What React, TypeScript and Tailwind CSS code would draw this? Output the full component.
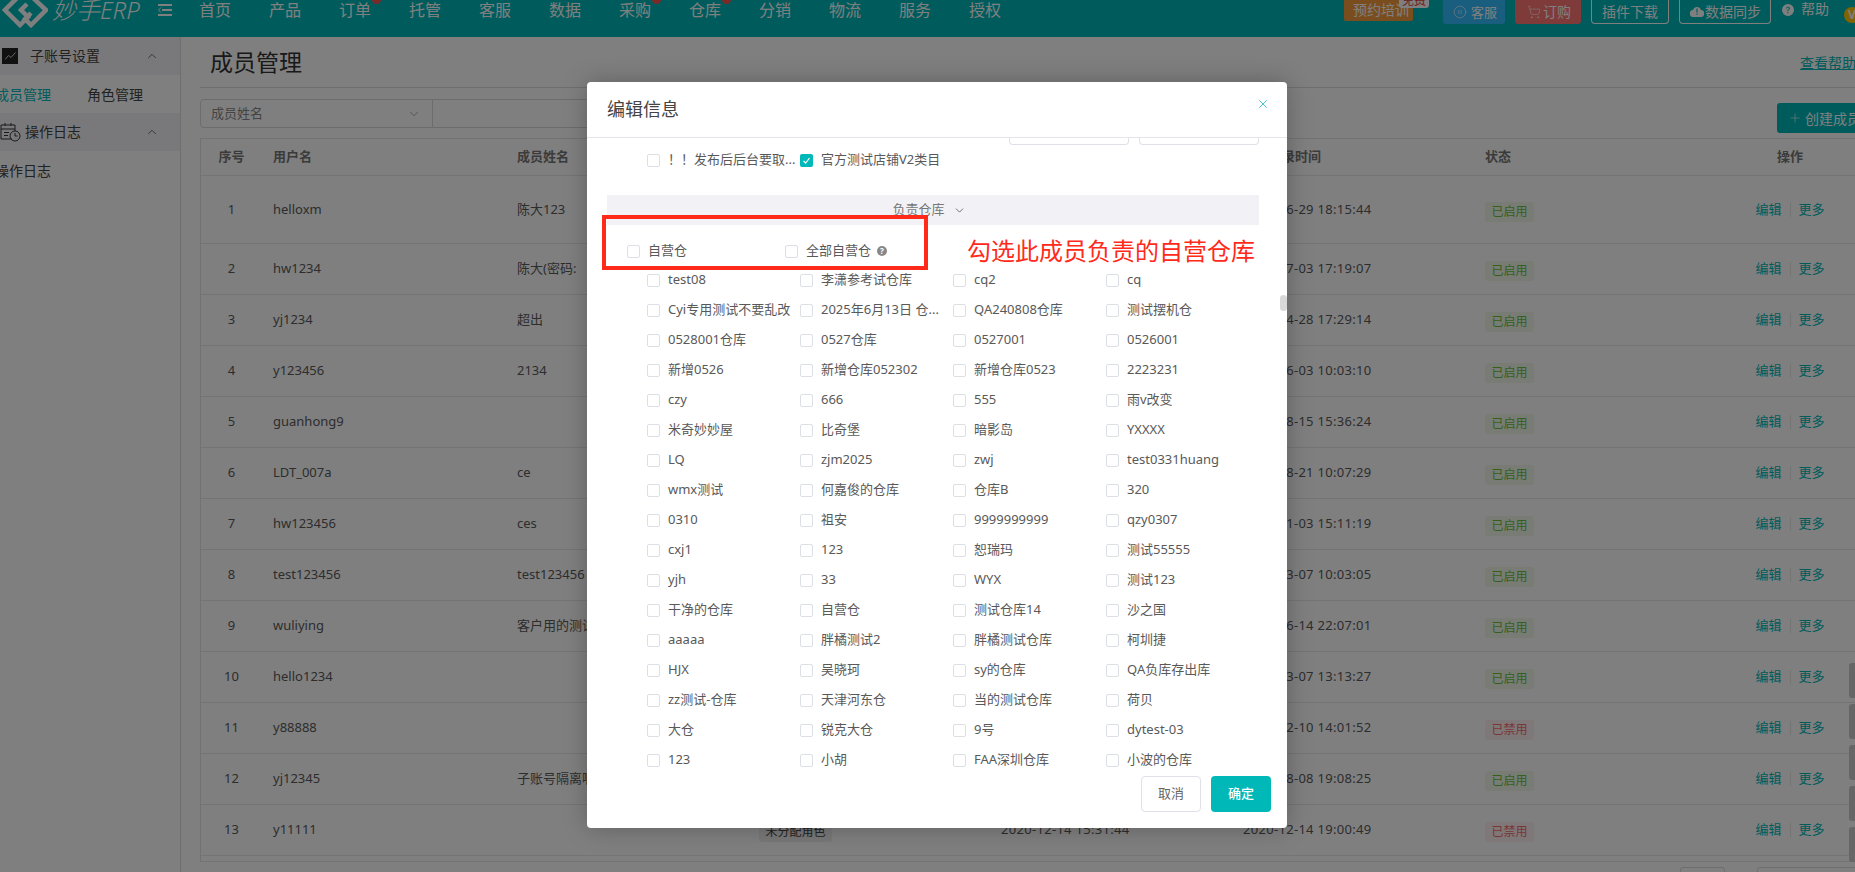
import { BsQuestionCircleFill } from "react-icons/bs";
import { ChevronDown, ChevronUp, CirclePause, Plus, ShoppingCart, X } from "lucide-react";

const navItems = [
  { label: "首页" },
  { label: "产品" },
  { label: "订单", dot: true },
  { label: "托管" },
  { label: "客服" },
  { label: "数据" },
  { label: "采购", dot: true },
  { label: "仓库", dot: true },
  { label: "分销" },
  { label: "物流" },
  { label: "服务" },
  { label: "授权" },
];

const members = [
  { user: "helloxm", name: "陈大123", created: "2021-03-11 10:22:15", login: "2025-06-29 18:15:44", on: true },
  { user: "hw1234", name: "陈大(密码:", created: "2021-04-02 11:30:08", login: "2025-07-03 17:19:07", on: true },
  { user: "yj1234", name: "超出", created: "2021-05-19 09:12:33", login: "2025-04-28 17:29:14", on: true },
  { user: "y123456", name: "2134", created: "2021-06-21 14:41:50", login: "2025-06-03 10:03:10", on: true },
  { user: "guanhong9", name: "", created: "2021-08-15 15:36:24", login: "2024-08-15 15:36:24", on: true },
  { user: "LDT_007a", name: "ce", created: "2021-10-08 16:05:12", login: "2024-08-21 10:07:29", on: true },
  { user: "hw123456", name: "ces", created: "2021-11-30 13:48:02", login: "2025-01-03 15:11:19", on: true },
  { user: "test123456", name: "test123456", created: "2022-01-14 10:20:41", login: "2025-03-07 10:03:05", on: true },
  { user: "wuliying", name: "客户用的测试", created: "2022-02-09 17:55:36", login: "2024-06-14 22:07:01", on: true },
  { user: "hello1234", name: "", created: "2022-03-01 09:09:09", login: "2025-03-07 13:13:27", on: true },
  { user: "y88888", name: "", created: "2020-12-10 14:01:52", login: "2020-12-10 14:01:52", on: false },
  { user: "yj12345", name: "子账号隔离啊", created: "2022-07-18 11:27:40", login: "2024-08-08 19:08:25", on: true },
  { user: "y11111", name: "", created: "2020-12-14 15:31:44", login: "2020-12-14 19:00:49", on: false },
];

const warehouses = [
  ["test08", "李潇参考试仓库", "cq2", "cq"],
  ["Cyi专用测试不要乱改", "2025年6月13日 仓...", "QA240808仓库", "测试摆机仓"],
  ["0528001仓库", "0527仓库", "0527001", "0526001"],
  ["新增0526", "新增仓库052302", "新增仓库0523", "2223231"],
  ["czy", "666", "555", "雨v改变"],
  ["米奇妙妙屋", "比奇堡", "暗影岛", "YXXXX"],
  ["LQ", "zjm2025", "zwj", "test0331huang"],
  ["wmx测试", "何嘉俊的仓库", "仓库B", "320"],
  ["0310", "祖安", "9999999999", "qzy0307"],
  ["cxj1", "123", "恕瑞玛", "测试55555"],
  ["yjh", "33", "WYX", "测试123"],
  ["干净的仓库", "自营仓", "测试仓库14", "沙之国"],
  ["aaaaa", "胖橘测试2", "胖橘测试仓库", "柯圳捷"],
  ["HJX", "吴晓珂", "sy的仓库", "QA负库存出库"],
  ["zz测试-仓库", "天津河东仓", "当的测试仓库", "荷贝"],
  ["大仓", "锐克大仓", "9号", "dytest-03"],
  ["123", "小胡", "FAA深圳仓库", "小波的仓库"],
];

const Check = ({ label, checked }: { label: string; checked?: boolean }) => (
  <div className="flex items-center gap-[8px] text-[13px] text-[#595959] whitespace-nowrap">
    {checked ? (
      <span className="w-[13px] h-[13px] rounded-[2px] bg-[#00b8b8] flex items-center justify-center">
        <svg width="9" height="9" viewBox="0 0 9 9" fill="none">
          <path d="M1.5 4.8 L3.6 7 L7.5 2" stroke="#fff" strokeWidth="1.2" />
        </svg>
      </span>
    ) : (
      <span className="w-[13px] h-[13px] rounded-[2px] border border-[#dcdfe6] bg-white" />
    )}
    <span>{label}</span>
  </div>
);

const Header = () => (
  <header className="h-[37px] bg-[#00b8b8] flex items-start text-white overflow-hidden">
    <svg className="ml-[2px] shrink-0" width="46" height="28" viewBox="0 0 46 28" fill="none" stroke="#fff" strokeWidth="4.5">
      <path d="M17 -4 L3 10 L18 25 L26 17 L19 10 L25 4" />
      <path d="M29 -4 L44 10 L29 25 L23 19 L29 13" />
    </svg>
    <span className="ml-[4px] w-[106px] text-[24px] leading-[20px] italic font-light whitespace-nowrap">妙手ERP</span>
    <svg className="mt-[4px] shrink-0" width="14" height="12" viewBox="0 0 14 12" fill="none" stroke="#fff" strokeWidth="2">
      <path d="M0 1 H14 M4 6 H14 M0 11 H14" />
      <path d="M3 3.5 L0.5 6 L3 8.5" strokeWidth="1" />
    </svg>
    <nav className="ml-[27px] flex gap-[38px]">
      {navItems.map(item => (
        <div key={item.label} className="relative w-[32px] text-[16px] leading-[20px] whitespace-nowrap">
          {item.label}
          {item.dot && <span className="absolute left-[33px] top-[-5px] w-[9px] h-[9px] rounded-full bg-[#ff5050]" />}
        </div>
      ))}
    </nav>
    <div className="ml-auto flex items-start text-[14px] leading-[20px] whitespace-nowrap">
      <div className="relative w-[69px] h-[21px] pl-[9px] bg-[#f59a3c] rounded-b-[2px]">
        预约培训
        <span className="absolute left-[55px] top-[-6px] w-[30px] h-[14px] rounded-[3px] bg-white text-[#e04040] text-[12px] leading-[14px] text-center">免费</span>
      </div>
      <div className="ml-[30px] w-[62px] h-[24px] pl-[10px] bg-[#34bcff] rounded-b-[3px] flex items-center gap-[4px] text-[13px]">
        <CirclePause size={14} strokeWidth={1} />
        客服
      </div>
      <div className="ml-[10px] w-[66px] h-[24px] pl-[12px] bg-[#ff7474] rounded-b-[3px] flex items-center gap-[2px]">
        <ShoppingCart size={14} strokeWidth={1} />
        订购
      </div>
      <div className="ml-[10px] w-[78px] h-[24px] border border-t-0 border-white rounded-b-[4px] flex items-center justify-center">插件下载</div>
      <div className="ml-[10px] w-[92px] h-[24px] border border-t-0 border-white rounded-b-[4px] flex items-center pl-[10px] gap-[1px]">
        <svg width="14" height="11" viewBox="0 0 14 11" fill="#fff">
          <path d="M3.5 11 A3.5 3.5 0 0 1 3 4 A4.2 4.2 0 0 1 11 4 A3.5 3.5 0 0 1 10.5 11 Z" />
          <path d="M6.4 2.5 H7.6 V6.5 H6.4 Z M6.4 7.5 H7.6 V8.8 H6.4 Z" fill="#00b8b8" />
        </svg>
        数据同步
      </div>
      <BsQuestionCircleFill className="ml-[11px] mt-[4px]" size={12} />
      <span className="ml-[7px] mt-[-1px]">帮助</span>
      <span className="ml-[15px] mt-[7px] w-[16px] h-[16px] shrink-0 -mr-[5px] rounded-full bg-[#ffc800] text-[12px] leading-[16px] font-bold text-center">V</span>
    </div>
  </header>
);

const Sidebar = () => (
  <aside className="w-[181px] shrink-0 border-r border-[#dcdcdc] bg-white text-[14px] text-[#444] overflow-hidden">
    <div className="h-[38px] bg-[#f2f3f6] flex items-center pl-[2px] pr-[21px]">
      <span className="w-[16px] h-[16px] bg-[#222] flex items-center justify-center">
        <svg width="11" height="8" viewBox="0 0 11 8" fill="none" stroke="#ccc" strokeWidth="1">
          <path d="M0 7.5 L3.5 3.5 L6 5.5 L10.5 0.5" />
        </svg>
      </span>
      <span className="ml-[12px] -mt-[1px]">子账号设置</span>
      <ChevronUp className="ml-auto" size={14} strokeWidth={1.2} color="#333" />
    </div>
    <div className="h-[38px] flex items-center -ml-[5px]">
      <span className="text-[#00b8b8] w-[92px]">成员管理</span>
      <span>角色管理</span>
    </div>
    <div className="h-[38px] bg-[#f2f3f6] flex items-center pr-[21px]">
      <svg width="21" height="20" viewBox="0 0 21 20" fill="none" stroke="#333" strokeWidth="1">
        <path d="M12 17 H1 V3 H15 V9 M1 7 H15 M5 1 V4 M11 1 V4 M4 10.5 H9 M4 13.5 H8" />
        <circle cx="15" cy="14" r="5" />
        <path d="M15 11 V14 H17.5" />
      </svg>
      <span className="ml-[4px] -mt-[1px]">操作日志</span>
      <ChevronUp className="ml-auto" size={14} strokeWidth={1.2} color="#333" />
    </div>
    <div className="h-[38px] flex items-center -ml-[5px]">操作日志</div>
  </aside>
);

const MemberTable = () => (
  <div className="w-[1664px] border-l border-t border-[#e4e4e4] text-[13px] text-[#5a5a5a]">
    <div className="h-[37px] flex items-center border-b border-[#e8e8e8] font-bold text-[#777]">
      <div className="w-[61px] text-center">序号</div>
      <div className="w-[244px] pl-[11px]">用户名</div>
      <div className="w-[242px] pl-[11px]">成员姓名</div>
      <div className="w-[242px] pl-[11px]">角色</div>
      <div className="w-[242px] pl-[11px]">创建时间</div>
      <div className="w-[242px] pl-[11px]">最后登录时间</div>
      <div className="w-[242px] pl-[11px]">状态</div>
      <div className="w-[148px] text-center">操作</div>
    </div>
    {members.map((m, i) => (
      <div key={m.user} className={`flex items-center border-b border-[#e8e8e8] ${i === 0 ? "h-[68px]" : "h-[51px]"}`}>
        <div className="w-[61px] text-center">{i + 1}</div>
        <div className="w-[244px] pl-[11px]">{m.user}</div>
        <div className="w-[242px] pl-[11px] whitespace-nowrap">{m.name}</div>
        <div className="w-[242px] pl-[11px]">
          <span className="inline-block w-[73px] h-[20px] mt-[4px] bg-[#f0f0f0] rounded-[2px] text-[12px] leading-[20px] text-center text-[#444]">未分配角色</span>
        </div>
        <div className="w-[242px] pl-[11px] tracking-[0.3px]">{m.created}</div>
        <div className="w-[242px] pl-[11px] tracking-[0.3px]">{m.login}</div>
        <div className="w-[242px] pl-[11px]">
          <span className={`inline-block w-[49px] h-[20px] mt-[4px] rounded-[3px] text-[12px] leading-[20px] text-center ${m.on ? "bg-[#f0f9eb] text-[#67c23a]" : "bg-[#fef0f0] text-[#f56c6c]"}`}>
            {m.on ? "已启用" : "已禁用"}
          </span>
        </div>
        <div className="w-[148px] flex items-center justify-center text-[#00b8b8]">
          <span>编辑</span>
          <span className="mx-[8px] w-px h-[14px] bg-[#e8e8e8]" />
          <span>更多</span>
        </div>
      </div>
    ))}
    <div className="h-[6px] border-b border-[#e8e8e8]" />
  </div>
);

const Main = () => (
  <main className="flex-1 min-w-0 pl-[19px] bg-white">
    <div className="h-[51px] flex items-center border-b border-[#dcdcdc] pt-[1px]">
      <h1 className="ml-[10px] text-[23px] font-normal text-[#333]">成员管理</h1>
      <a className="ml-auto shrink-0 -mr-px text-[14px] text-[#00b8b8] underline">查看帮助</a>
    </div>
    <div className="mt-[11px] mb-[5px] h-[34px] flex items-start">
      <div className="w-[233px] h-[29px] border border-[#d9d9d9] rounded-l-[4px] flex items-center justify-between pl-[10px] pr-[11px] text-[13px] text-[#888]">
        成员姓名
        <ChevronDown size={14} strokeWidth={1.2} />
      </div>
      <div className="w-[500px] h-[29px] border border-l-0 border-[#d9d9d9]" />
      <button className="ml-auto mt-[4px] -mr-[20px] w-[98px] h-[30px] bg-[#00b8b8] rounded-[3px] flex items-center pl-[11px] gap-[3px] text-[14px] text-white whitespace-nowrap">
        <Plus size={14} strokeWidth={1} />
        创建成员
      </button>
    </div>
    <MemberTable />
    <div className="mt-[5px] flex gap-[32px] pl-[1480px]">
      <div className="w-[45px] h-[20px] shrink-0 border border-[#dcdcdc] rounded-[3px] bg-white" />
      <div className="w-[120px] h-[20px] shrink-0 border border-[#dcdcdc] rounded-[3px] bg-white" />
    </div>
  </main>
);

const EditModal = () => (
  <div className="absolute left-[587px] top-[82px] w-[700px] h-[746px] bg-white rounded-[4px] shadow-[0_0_24px_rgba(0,0,0,0.25)] flex flex-col">
    <div className="h-[56px] shrink-0 border-b border-[#e4e4ec] flex items-start justify-between pl-[20px] pr-[17px]">
      <h2 className="mt-[15px] text-[18px] leading-[24px] font-normal text-[#444]">编辑信息</h2>
      <X className="mt-[15px]" size={14} strokeWidth={1.5} color="#2fb8dc" />
    </div>
    <div className="h-[7px] flex justify-end gap-[10px] pr-[28px]">
      <div className="w-[120px] border border-t-0 border-[#e0e0e8] rounded-b-[4px]" />
      <div className="w-[120px] border border-t-0 border-[#e0e0e8] rounded-b-[4px]" />
    </div>
    <div className="h-[30px] flex items-center pl-[60px]">
      <div className="w-[153px]"><Check label="！！发布后后台要取..." /></div>
      <Check label="官方测试店铺V2类目" checked />
    </div>
    <div className="mt-[20px] ml-[20px] mr-[28px] h-[30px] bg-[#f2f2f6] flex items-center justify-center gap-[8px] pr-[8px] text-[13px] text-[#777]">
      负责仓库
      <ChevronDown size={13} strokeWidth={1.5} color="#555" />
    </div>
    <div className="mt-[12px] h-[28px] flex items-center pl-[40px]">
      <div className="w-[158px]"><Check label="自营仓" /></div>
      <Check label="全部自营仓" />
      <span className="ml-[6px] w-[10px] h-[10px] rounded-full bg-[#888] text-white text-[8px] leading-[10px] font-bold text-center">?</span>
    </div>
    <div className="grid grid-cols-[repeat(4,153px)] auto-rows-[30px] items-center pl-[60px]">
      {warehouses.flat().map((w, i) => (
        <Check key={i} label={w} />
      ))}
    </div>
    <div className="flex justify-end gap-[10px] pt-[1px] pr-[16px]">
      <button className="w-[60px] h-[36px] border border-[#e0e0e8] rounded-[4px] bg-white text-[13px] text-[#666]">取消</button>
      <button className="w-[60px] h-[36px] rounded-[4px] bg-[#00b8b8] text-[13px] font-medium text-white">确定</button>
    </div>
    <span className="absolute left-[693px] top-[213px] w-[7px] h-[16px] rounded-[4px] bg-[#d8d8d8]" />
    <div className="absolute left-[15px] top-[133px] w-[326px] h-[55px] border-[4px] border-[#ff2a1a]" />
    <span className="absolute left-[380px] top-[152px] text-[24px] leading-[34px] text-[#ff2a1a] whitespace-nowrap">勾选此成员负责的自营仓库</span>
  </div>
);

export default function App() {
  return (
    <div className="relative w-[1855px] h-[872px] overflow-hidden bg-white [font-family:'Noto_Sans','Noto_Sans_CJK_SC',sans-serif]">
      <Header />
      <div className="flex h-[835px]">
        <Sidebar />
        <Main />
      </div>
      <div className="absolute right-0 top-[663px] flex flex-col gap-[6px]">
        {[0, 1, 2, 3, 4].map(n => (
          <span key={n} className="w-[6px] h-[35px] rounded-l-[3px] bg-[#cccccc]" />
        ))}
      </div>
      <div className="absolute inset-0 bg-black/50" />
      <EditModal />
    </div>
  );
}
